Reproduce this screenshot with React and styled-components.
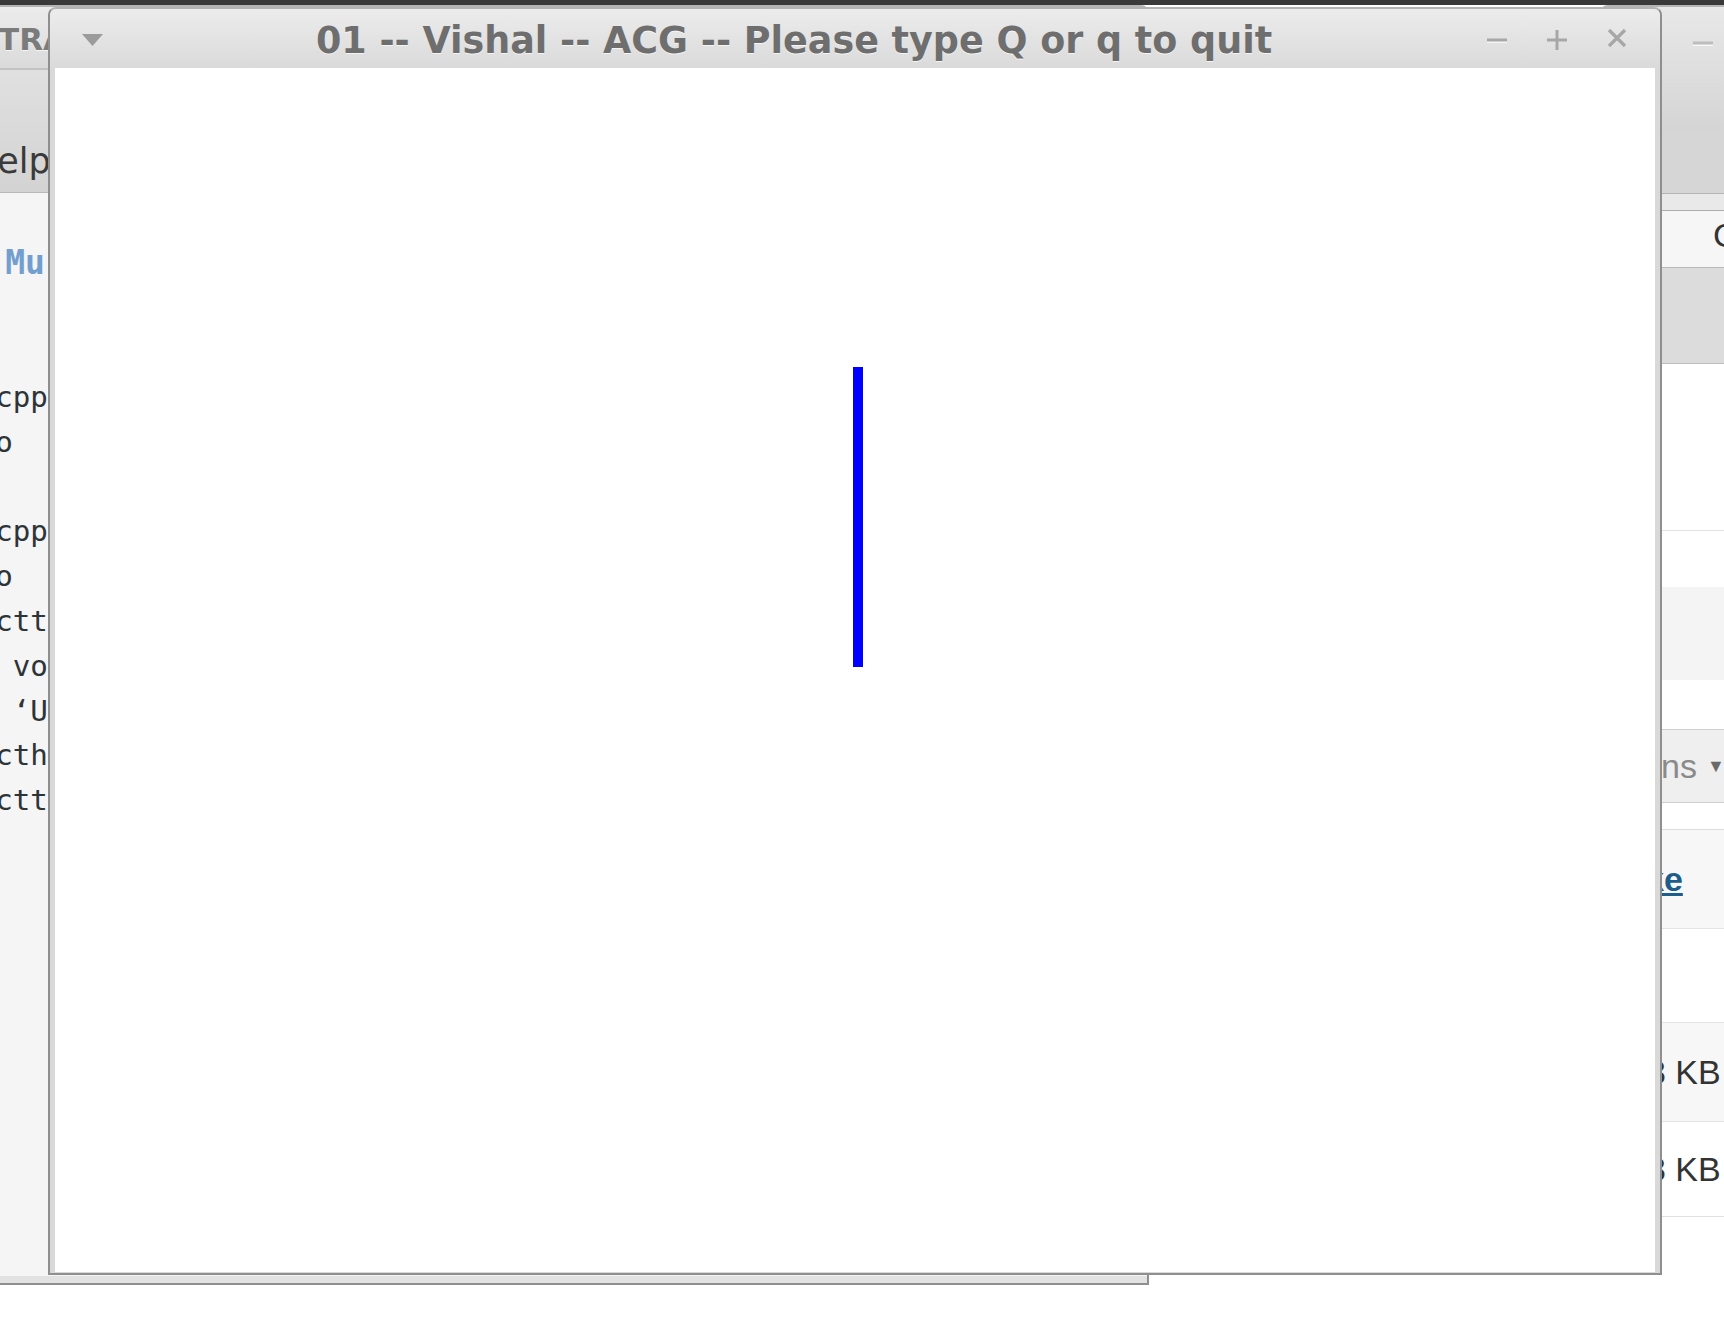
import React from "react";
import styled, { createGlobalStyle } from "styled-components";

const GlobalStyle = createGlobalStyle`
  html, body {
    margin: 0;
    padding: 0;
    overflow: hidden;
    background: #ffffff;
  }
  body {
    font-family: "DejaVu Sans", sans-serif;
  }
`;

const Desktop = styled.div`
  position: relative;
  width: 1724px;
  height: 1324px;
  overflow: hidden;
  background: #ffffff;
`;

const Panel = styled.div`
  height: 5px;
  background: #393939;
`;

const Window = styled.div`
  position: absolute;
  display: flex;
  flex-direction: column;
  box-sizing: border-box;
  border: 2px solid #8f8f8f;
  border-top-color: #b4b4b4;
  border-radius: 8px 8px 0 0;
  background: #dcdcdc;
  overflow: hidden;
`;

/* windows sit on a free desktop canvas */
const EditorWindow = styled(Window)`
  left: -400px;
  top: 5px;
  width: 1549px;
  height: 1280px;
  padding-bottom: 7px;
  background: #e2e2e2;
`;

const BrowserWindow = styled(Window)`
  left: 1600px;
  top: 5px;
  width: 300px;
  height: 1400px;
  border-left: none;
  border-bottom: none;
  background: #ffffff;
`;

const FrontWindow = styled(Window)`
  left: 48px;
  top: 7px;
  width: 1614px;
  height: 1268px;
  background: #d9d9d9;
  z-index: 2;
`;

const TitleBar = styled.div`
  display: flex;
  align-items: center;
  height: ${(p) => p.$h}px;
  padding-top: 3px;
  box-sizing: border-box;
  background: linear-gradient(#ececec, #dadada);
  flex-shrink: 0;
`;

const MenuSlot = styled.div`
  width: 69px;
  padding-left: 32px;
  box-sizing: border-box;
  display: flex;
  align-items: center;
`;

const Title = styled.div`
  flex: 1;
  text-align: center;
  font-family: "DejaVu Sans", sans-serif;
  font-weight: bold;
  font-size: 36.5px;
  color: #6e6e6e;
  text-shadow: 0 1px 0 rgba(255, 255, 255, 0.7);
  white-space: nowrap;
`;

const BackTitle = styled.div`
  padding-left: 396px;
  font-family: "DejaVu Sans", sans-serif;
  font-weight: bold;
  font-size: 31px;
  color: #7b7b7b;
  text-shadow: 0 1px 0 rgba(255, 255, 255, 0.7);
  white-space: nowrap;
`;

const Controls = styled.div`
  width: 191px;
  box-sizing: border-box;
  padding: 0 33px 0 18px;
  display: flex;
  align-items: center;
  gap: 40px;
`;

const Control = styled.svg`
  width: 20px;
  height: 20px;
  flex-shrink: 0;
  overflow: visible;
`;

const Canvas = styled.div`
  flex: 1;
  margin: 0 5px 5px 5px;
  background: #ffffff;
`;

const MenuBar = styled.div`
  height: 125px;
  flex-shrink: 0;
  box-sizing: border-box;
  border-top: 2px solid #c2c2c2;
  border-bottom: 1px solid #b9b9b9;
  background: linear-gradient(#e0e0e0, #d3d3d3);
  display: flex;
  align-items: center;
  padding: 60px 0 0 369px;
  font-family: "DejaVu Sans", sans-serif;
  font-size: 35px;
  color: #3a3a3a;
  white-space: nowrap;
`;

const Editor = styled.div`
  flex: 1;
  background: #f5f5f5;
  padding: 47.6px 0 0 393.2px;
  font-family: "DejaVu Sans Mono", monospace;
  font-size: 29.2px;
  color: #2e3436;
`;

const CodeLine = styled.div`
  height: 44.8px;
  line-height: 44.8px;
  white-space: pre;
`;

const Heading = styled(CodeLine)`
  padding-left: 10px;
  font-size: 33px;
  font-weight: bold;
  color: #729fcf;
`;

const Band = styled.div`
  flex-shrink: 0;
  height: ${(p) => p.$h}px;
  background: ${(p) => p.$bg || "#ffffff"};
  border-bottom: ${(p) => (p.$line ? `1px solid ${p.$line}` : "none")};
  display: flex;
  align-items: center;
  padding-left: ${(p) => p.$pad || 0}px;
  font-family: "Liberation Sans", Arial, sans-serif;
  font-size: 34px;
  color: #333333;
  white-space: nowrap;
`;

const BrowserTop = styled(Band)`
  background: linear-gradient(#e8e8e8, #d5d5d5);
  align-items: flex-start;
  padding-top: 26px;
  box-sizing: border-box;
`;

const UrlField = styled(Band)`
  box-sizing: border-box;
  padding-bottom: 8px;
`;

const Tab = styled.span`
  color: #8a8a8a;
`;

const Caret = styled.span`
  margin-left: 10px;
  font-size: 18px;
  color: #6a6a6a;
`;

const Link = styled.span`
  font-weight: bold;
  color: #1d5d8c;
  text-decoration: underline;
`;

function Minus({ color }) {
  return (
    <Control viewBox="0 0 20 20">
      <rect x="0" y="10" width="20" height="3" fill="#ffffff" opacity="0.7" />
      <rect x="0" y="8.5" width="20" height="3" fill={color} />
    </Control>
  );
}

function Plus() {
  return (
    <Control viewBox="0 0 20 20">
      <rect x="0" y="8.5" width="20" height="3" fill="#a7a7a7" />
      <rect x="8.5" y="0" width="3" height="20" fill="#a7a7a7" />
    </Control>
  );
}

function Close() {
  return (
    <Control viewBox="0 0 20 20">
      <path
        d="M2 0 L18 16 M18 0 L2 16"
        stroke="#a7a7a7"
        strokeWidth="3.2"
        fill="none"
      />
    </Control>
  );
}

const editorLines = ["", "", "cpp", "o", "", "cpp", "o", "ctt", " vo", " \u2018U", "cth", "ctt"];

export default function App() {
  return (
    <Desktop>
      <GlobalStyle />
      <Panel />

      <EditorWindow>
        <TitleBar $h={61}>
          <BackTitle>TRA</BackTitle>
        </TitleBar>
        <MenuBar>Help</MenuBar>
        <Editor>
          <Heading>Mu</Heading>
          {editorLines.map((line, i) => (
            <CodeLine key={i}>{line}</CodeLine>
          ))}
        </Editor>
      </EditorWindow>

      <BrowserWindow>
        <BrowserTop $h={123} $pad={93}>
          <Minus color="#bdbdbd" />
        </BrowserTop>
        <Band $h={63} $bg="#d6d6d6" $line="#b4b4b4" />
        <Band $h={16} $bg="#e9e9e9" $line="#adadad" />
        <UrlField $h={57} $bg="#f6f6f6" $line="#b9b9b9" $pad={113}>
          C
        </UrlField>
        <Band $h={95} $bg="#dcdcdc" $line="#bdbdbd" />
        <Band $h={166} $line="#e2e2e2" />
        <Band $h={56} />
        <Band $h={93} $bg="#f4f4f4" />
        <Band $h={49} $line="#d0d0d0" />
        <Band $h={72} $bg="#efefef" $line="#d0d0d0" $pad={61}>
          <Tab>ns</Tab>
          <Caret>▼</Caret>
        </Band>
        <Band $h={26} $line="#dedede" />
        <Band $h={98} $bg="#f7f7f7" $line="#e4e4e4" $pad={45}>
          <Link>ke</Link>
        </Band>
        <Band $h={93} $line="#e4e4e4" />
        <Band $h={98} $bg="#f7f7f7" $line="#e4e4e4" $pad={47}>
          3 KB
        </Band>
        <Band $h={94} $line="#e0e0e0" $pad={47}>
          3 KB
        </Band>
      </BrowserWindow>

      <FrontWindow>
        <TitleBar $h={59}>
          <MenuSlot>
            <svg width="21" height="12" viewBox="0 0 21 12">
              <path d="M0 0 H21 L10.5 12 Z" fill="#9b9b9b" />
            </svg>
          </MenuSlot>
          <Title>01 -- Vishal -- ACG -- Please type Q or q to quit</Title>
          <Controls>
            <Minus color="#a7a7a7" />
            <Plus />
            <Close />
          </Controls>
        </TitleBar>
        <Canvas>
          <svg width="1600" height="1200" viewBox="0 0 1600 1200">
            <rect x="798" y="299" width="10" height="300" fill="#0000ff" />
          </svg>
        </Canvas>
      </FrontWindow>
    </Desktop>
  );
}
